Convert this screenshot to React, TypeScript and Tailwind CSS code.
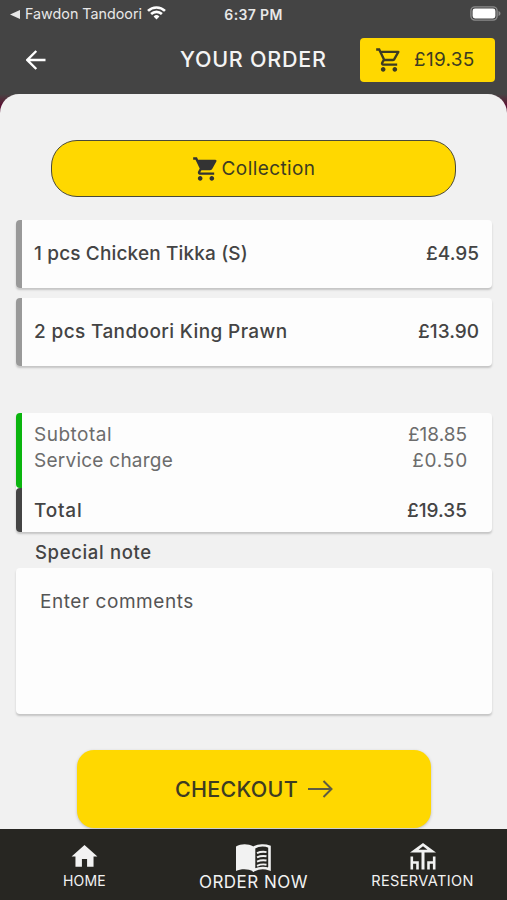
import { FC } from "react";
import { MdHome, MdOutlineShoppingCart, MdShoppingCart } from "react-icons/md";

const StatusBar: FC = () => {
  return (
    <div className="grid grid-cols-[217px_1fr_217px] items-center h-7 text-[#e8e8e8]">
      <div className="flex items-center pl-[10px]">
        <svg className="w-[10px] h-[9px]" viewBox="0 0 10 9" fill="currentColor">
          <path d="M0 4.5 10 0v9z" />
        </svg>
        <p className="ml-[5px] text-[14.3px] leading-5 whitespace-nowrap">Fawdon Tandoori</p>
        <svg className="ml-[5px] -mt-[3px] w-[19px] h-[14px]" viewBox="0 0 19 14" fill="none" stroke="#fff" strokeWidth="2.6">
          <path d="M1 4.9a12.2 12.2 0 0 1 17 0" />
          <path d="M4.1 8a7.8 7.8 0 0 1 10.8 0" />
          <path d="M6.6 10.4a4.3 4.3 0 0 1 5.8 0L9.5 13.4z" fill="#fff" stroke="none" />
        </svg>
      </div>
      <p className="text-center text-[14px] font-semibold tracking-[0.35px]">6:37 PM</p>
      <div className="flex justify-end pr-[6px] -mt-[2px]">
        <svg className="w-[31px] h-[15px]" viewBox="0 0 31 15">
          <rect x="0.9" y="0.9" width="26.2" height="13.2" rx="4" fill="none" stroke="#8b8b8b" strokeWidth="1.4" />
          <rect x="2.6" y="2.6" width="22.8" height="9.8" rx="2.4" fill="#fff" />
          <path d="M28.5 5v5c1.2-.5 2-1.4 2-2.5s-.8-2-2-2.5z" fill="#8b8b8b" />
        </svg>
      </div>
    </div>
  );
};

const Header: FC = () => {
  return (
    <div className="flex items-center h-[63px] pl-[26px] pr-3">
      <svg className="w-5 h-5" viewBox="0 0 20 20" fill="none" stroke="#fff" strokeWidth="2.4">
        <path d="M19.5 10H1.5M10.3 1 1.3 10l9 9" />
      </svg>
      <h1 className="ml-[134px] w-[180px] pb-[2px] text-[21.5px] tracking-[0.75px] leading-6 font-medium text-[#f4f4f4] whitespace-nowrap">YOUR ORDER</h1>
      <div className="flex items-center h-11 w-[135px] rounded-[4px] bg-[#ffd800] pl-[15px] text-[#3d3c22]">
        <MdOutlineShoppingCart className="w-7 h-7 shrink-0" />
        <p className="ml-[11px] text-[19px] tracking-[0.3px] leading-6">£19.35</p>
      </div>
    </div>
  );
};

type ItemProps = { name: string; price: string; nameClass: string };

const OrderItem: FC<ItemProps> = ({ name, price, nameClass }) => {
  return (
    <div className="flex h-[68px] rounded-[4px] bg-[#fdfdfd] shadow-[0_2px_2px_#c4c4c4] overflow-hidden">
      <div className="w-[6px] bg-[#999]" />
      <div className="flex flex-1 items-center justify-between pl-3 pr-[13px] pt-px text-[19px] text-[#444] font-medium">
        <p className={nameClass}>{name}</p>
        <p>{price}</p>
      </div>
    </div>
  );
};

const Summary: FC = () => {
  return (
    <div className="mt-[47px] rounded-[4px] bg-[#fdfdfd] shadow-[0_2px_2px_#c4c4c4] text-[19px]">
      <div className="flex h-[75px]">
        <div className="w-[6px] rounded-l-[4px] bg-[#0bb50f]" />
        <div className="flex-1 pt-[9px] pl-3 pr-[25px] leading-[26px] text-[#6c6c6c]">
          <div className="flex justify-between">
            <p className="tracking-[0.5px]">Subtotal</p>
            <p>£18.85</p>
          </div>
          <div className="flex justify-between">
            <p className="tracking-[0.25px]">Service charge</p>
            <p className="-mr-px tracking-[0.8px]">£0.50</p>
          </div>
        </div>
      </div>
      <div className="flex h-11">
        <div className="w-[6px] rounded-l-[4px] bg-[#444]" />
        <div className="flex flex-1 items-center justify-between pl-3 pr-[25px] pt-[2px] text-[#444] font-medium">
          <p className="tracking-[0.8px]">Total</p>
          <p>£19.35</p>
        </div>
      </div>
    </div>
  );
};

const MenuBookIcon: FC = () => {
  return (
    <svg className="w-[35px] h-[28px]" viewBox="0 0 35 28" fill="none" stroke="currentColor">
      <path d="M0 2.5C5-.3 12-.5 17.5 2.6V27.5C12 24.500 5 24.600 0 27z" fill="currentColor" stroke="none" />
      <path d="M18 3.600c4.500-2.600 11-2.800 15.500-.9v22.500c-4.800-1.700-10.800-1.500-15.500 1z" strokeWidth="2.6" />
      <path d="M21 9.200c3-1.400 6-1.700 9.500-1.100M21 13.400c3-1.400 6-1.700 9.500-1.100M21 17.600c3-1.400 6-1.700 9.500-1.100M21 21.800c3-1.400 6-1.700 9.500-1.100" strokeWidth="1.9" />
    </svg>
  );
};

const TableIcon: FC = () => {
  return (
    <svg className="w-[26px] h-[27px]" viewBox="0 0 26 27" fill="none" stroke="currentColor">
      <path d="M13 0 26 9.500H0zM13 3.200 8.500 6.800h9z" fill="currentColor" stroke="none" fillRule="evenodd" />
      <path d="M13 8v18.500" strokeWidth="3" />
      <path d="M1.800 13.500v13M1.800 19.500h5.700v7M24.200 13.500v13M24.200 19.500h-5.700v7" strokeWidth="2.6" />
    </svg>
  );
};

const NavBar: FC = () => {
  return (
    <div className="grid grid-cols-3 h-[71px] shrink-0 bg-[#272622] text-[#f2f2f2]">
      <div className="flex flex-col items-center pt-3">
        <MdHome className="w-[31px] h-[31px]" />
        <p className="-mt-px text-[14px] leading-5 tracking-[0.2px]">HOME</p>
      </div>
      <div className="flex flex-col items-center pt-[15px]">
        <MenuBookIcon />
        <p className="text-[17px] leading-5 tracking-[0.5px]">ORDER NOW</p>
      </div>
      <div className="flex flex-col items-center pt-[14px]">
        <TableIcon />
        <p className="pt-px text-[14.5px] leading-5 tracking-[0.4px]">RESERVATION</p>
      </div>
    </div>
  );
};

const App: FC = () => {
  return (
    <div className="flex flex-col w-[507px] h-[900px] overflow-hidden bg-[#f1f1f1] font-[Inter,sans-serif]">
      <div className="h-[94px] shrink-0 bg-[#444]">
        <StatusBar />
        <Header />
      </div>
      <div className="bg-linear-to-b from-[#444] to-[#5a1034] to-[11px]">
        <div className="h-[735px] rounded-t-[19px] bg-[#f1f1f1] pl-4 pr-[15px] pt-[46px]">
          <div className="ml-[35px] mr-9 flex h-[57px] items-center justify-center rounded-[26px] border border-[#4a4a3a] bg-[#ffd800] text-[#3d3c22]">
            <MdShoppingCart className="w-7 h-7 text-[#333]" />
            <p className="ml-[2px] pt-px text-[19px] tracking-[0.4px]">Collection</p>
          </div>
          <div className="mt-[23px] flex flex-col gap-[10px]">
            <OrderItem name="1 pcs Chicken Tikka (S)" price="£4.95" nameClass="tracking-[0.15px]" />
            <OrderItem name="2 pcs Tandoori King Prawn" price="£13.90" nameClass="tracking-[0.38px]" />
          </div>
          <Summary />
          <p className="pl-[19px] pt-2 h-9 text-[18.5px] leading-6 tracking-[0.65px] font-medium text-[#444]">Special note</p>
          <div className="h-[146px] rounded-[4px] bg-[#fdfdfd] shadow-[0_2px_2px_#c4c4c4] pl-6 pt-[22px] text-[19px] leading-6 tracking-[0.55px] text-[#555]">
            Enter comments
          </div>
          <div className="mt-9 mx-[61px] flex h-[78px] items-center justify-center rounded-[17px] bg-[#ffd800] shadow-[0_1px_3px_#bbb]">
            <p className="text-[21.5px] pt-px font-medium tracking-[0.25px] text-[#3d3c22]">CHECKOUT</p>
            <svg className="ml-[10px] w-[25px] h-[18px]" viewBox="0 0 25 18" fill="none" stroke="#5f5c43" strokeWidth="2">
              <path d="M0 9h24M15.5 1l8 8-8 8" />
            </svg>
          </div>
        </div>
      </div>
      <NavBar />
    </div>
  );
};

export default App;
